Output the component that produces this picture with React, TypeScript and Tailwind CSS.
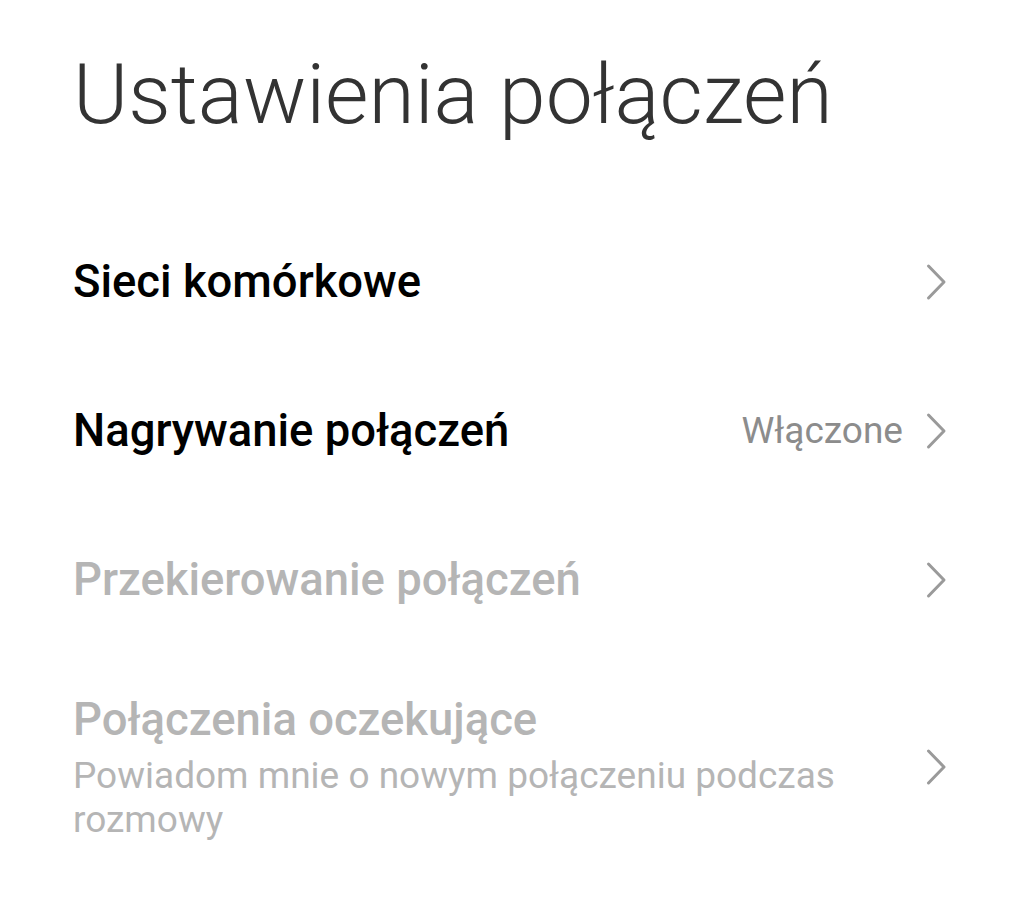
function Chevron() {
  return (
    <svg width="22" height="38" viewBox="0 0 22 38" fill="none" className="shrink-0">
      <path d="M3.5 3 L19 19 L3.5 35" stroke="#9a9a9a" strokeWidth="3" strokeLinecap="round" strokeLinejoin="round" />
    </svg>
  );
}

interface RowProps {
  label: string;
  value?: string;
  subtitle?: string;
  disabled?: boolean;
}

function Row({ label, value, subtitle, disabled }: RowProps) {
  return (
    <div
      className={`flex items-center justify-between gap-6 ${
        subtitle ? "pt-[38px] pb-[30px]" : "h-[149px]"
      }`}
    >
      <div className="min-w-0">
        <p
          className={`text-[45.4px] leading-[56px] font-medium ${
            disabled ? "text-[#b5b5b5]" : "text-black"
          }`}
        >
          {label}
        </p>
        {subtitle && (
          <p className="text-[37px] leading-[44px] text-[#b5b5b5] mt-[6px] pr-10">{subtitle}</p>
        )}
      </div>
      <div className="flex items-center gap-[22px] shrink-0">
        {value && <span className="text-[37px] text-[#8c8c8c]">{value}</span>}
        <Chevron />
      </div>
    </div>
  );
}

export default function App() {
  return (
    <div className="min-h-[906px] bg-white pl-[73px] pr-[77px] font-['Roboto',sans-serif]">
      <h1 className="pt-[53px] text-[84px] leading-[84px] font-light text-[#333333]">
        Ustawienia połączeń
      </h1>
      <div className="mt-[70px]">
        <Row label="Sieci komórkowe" />
        <Row label="Nagrywanie połączeń" value="Włączone" />
        <Row label="Przekierowanie połączeń" disabled />
        <Row
          label="Połączenia oczekujące"
          subtitle="Powiadom mnie o nowym połączeniu podczas rozmowy"
          disabled
        />
      </div>
    </div>
  );
}
